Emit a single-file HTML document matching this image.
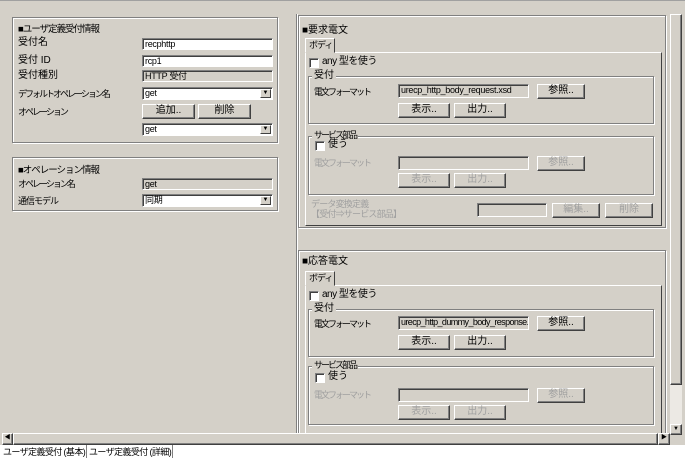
<!DOCTYPE html><html><head><meta charset="utf-8"><style>
*{box-sizing:border-box;margin:0;padding:0}
body{width:685px;height:461px;background:#fff;position:relative;overflow:hidden;font-family:"Liberation Sans","Noto Sans CJK JP",sans-serif;font-size:10px;color:#000}
.a{position:absolute}
.bg{left:0;top:0;width:685px;height:446px;background:#d4d0c8;border-top:1px solid #a0a0a0}
.g{position:absolute;border:1px solid #808080;box-shadow:inset 1px 1px 0 #fff,1px 1px 0 #fff}
.t{position:absolute;white-space:nowrap;line-height:12px}
.k{font-size:9px;letter-spacing:-2px}
.h{font-size:9.5px;letter-spacing:-1px}
.in{position:absolute;background:#fff;border:1px solid;border-color:#808080 #fff #fff #808080;box-shadow:inset 1px 1px 0 #404040;padding-left:2px;line-height:11px;white-space:nowrap;overflow:hidden;font-size:9px;letter-spacing:-0.3px}
.ro{background:#d4d0c8}
.b{position:absolute;background:#d4d0c8;border:1px solid;border-color:#fff #404040 #404040 #fff;box-shadow:inset -1px -1px 0 #808080;text-align:center;line-height:12px;white-space:nowrap}
.d{color:#a0a0a0}
.dd{position:absolute;right:1px;top:1px;width:11px;height:9px;background:#d4d0c8;border:1px solid;border-color:#fff #404040 #404040 #fff;font-size:6px;text-align:center;line-height:7px;letter-spacing:0}
.cb{position:absolute;width:10px;height:10px;background:#fff;border:1px solid;border-color:#808080 #fff #fff #808080;box-shadow:inset 1px 1px 0 #404040}
.lg{position:absolute;background:#d4d0c8;padding:0 2px;line-height:12px;white-space:nowrap}
.tab{position:absolute;background:#d4d0c8;border:1px solid;border-color:#fff #404040 transparent #fff;padding-left:3px;line-height:12px;white-space:nowrap;font-size:9px;letter-spacing:-1px}
</style></head><body>
<div class="a bg"></div>
<div class="a" style="left:296px;top:14px;width:1px;height:420px;background:#808080"></div>
<div class="a" style="left:297px;top:14px;width:1px;height:420px;background:#fff"></div>

<div class="g" style="left:12px;top:17px;width:266px;height:126px"></div>
<div class="t h" style="left:18px;top:24px">■ユーザ定義受付情報</div>
<div class="t" style="left:18px;top:37px">受付名</div>
<div class="in" style="left:142px;top:38px;width:131px;height:12px">recphttp</div>
<div class="t" style="left:18px;top:55px">受付 ID</div>
<div class="in" style="left:142px;top:55px;width:131px;height:12px">rcp1</div>
<div class="t" style="left:18px;top:70px">受付種別</div>
<div class="in ro" style="left:142px;top:70px;width:131px;height:12px">HTTP 受付</div>
<div class="t k" style="left:18px;top:88px">デフォルトオペレーション名</div>
<div class="in" style="left:142px;top:87px;width:131px;height:13px">get<div class="dd">▼</div></div>
<div class="t k" style="left:18px;top:106px">オペレーション</div>
<div class="b" style="left:142px;top:104px;width:53px;height:15px">追加..</div>
<div class="b" style="left:198px;top:104px;width:53px;height:15px">削除</div>
<div class="in" style="left:142px;top:123px;width:131px;height:13px">get<div class="dd">▼</div></div>

<div class="g" style="left:12px;top:157px;width:266px;height:54px"></div>
<div class="t h" style="left:18px;top:165px">■オペレーション情報</div>
<div class="t k" style="left:18px;top:178px">オペレーション名</div>
<div class="in ro" style="left:142px;top:178px;width:131px;height:12px">get</div>
<div class="t k" style="left:18px;top:195px;letter-spacing:-1px">通信モデル</div>
<div class="in" style="left:142px;top:194px;width:131px;height:13px">同期<div class="dd">▼</div></div>

<div class="g" style="left:298px;top:15px;width:368px;height:213px"></div>
<div class="t" style="left:302px;top:25px">■要求電文</div>
<div class="a" style="left:305px;top:52px;width:357px;height:174px;border:1px solid;border-color:#fff #404040 #404040 #fff"></div>
<div class="tab" style="left:305px;top:38px;width:30px;height:15px">ボディ</div>
<div class="cb" style="left:309px;top:58px"></div><div class="t" style="left:322px;top:56px;letter-spacing:-0.5px">any 型を使う</div>
<div class="g" style="left:308px;top:76px;width:346px;height:48px"></div><div class="lg" style="left:312px;top:70px">受付</div>
<div class="t k" style="left:314px;top:86px">電文フォーマット</div>
<div class="in ro" style="left:398px;top:84px;width:131px;height:14px">urecp_http_body_request.xsd</div>
<div class="b" style="left:537px;top:84px;width:48px;height:15px">参照..</div>
<div class="b" style="left:398px;top:103px;width:52px;height:15px">表示..</div>
<div class="b" style="left:454px;top:103px;width:52px;height:15px">出力..</div>
<div class="g" style="left:308px;top:136px;width:346px;height:59px"></div><div class="lg k" style="left:312px;top:129px">サービス部品</div>
<div class="cb" style="left:315px;top:141px"></div><div class="t" style="left:328px;top:139px">使う</div>
<div class="t d k" style="left:314px;top:157px">電文フォーマット</div>
<div class="in ro" style="left:398px;top:156px;width:131px;height:14px"></div>
<div class="b d" style="left:537px;top:156px;width:48px;height:15px">参照..</div>
<div class="b d" style="left:398px;top:173px;width:52px;height:15px">表示..</div>
<div class="b d" style="left:454px;top:173px;width:52px;height:15px">出力..</div>
<div class="t d" style="left:311px;top:199px;line-height:10px;font-size:9px;letter-spacing:-0.8px">データ変換定義<br>【受付⇒サービス部品】</div>
<div class="in ro" style="left:477px;top:203px;width:70px;height:14px"></div>
<div class="b d" style="left:552px;top:203px;width:48px;height:15px">編集..</div>
<div class="b d" style="left:605px;top:203px;width:48px;height:15px">削除</div>

<div class="g" style="left:298px;top:250px;width:368px;height:200px"></div>
<div class="t" style="left:302px;top:256px">■応答電文</div>
<div class="a" style="left:305px;top:285px;width:357px;height:160px;border:1px solid;border-color:#fff #404040 #404040 #fff"></div>
<div class="tab" style="left:305px;top:271px;width:30px;height:15px">ボディ</div>
<div class="cb" style="left:309px;top:291px"></div><div class="t" style="left:322px;top:289px;letter-spacing:-0.5px">any 型を使う</div>
<div class="g" style="left:308px;top:309px;width:346px;height:48px"></div><div class="lg" style="left:312px;top:303px">受付</div>
<div class="t k" style="left:314px;top:318px">電文フォーマット</div>
<div class="in ro" style="left:398px;top:316px;width:131px;height:14px;letter-spacing:-0.6px">urecp_http_dummy_body_response.xsd</div>
<div class="b" style="left:537px;top:316px;width:48px;height:15px">参照..</div>
<div class="b" style="left:398px;top:335px;width:52px;height:15px">表示..</div>
<div class="b" style="left:454px;top:335px;width:52px;height:15px">出力..</div>
<div class="g" style="left:308px;top:366px;width:346px;height:59px"></div><div class="lg k" style="left:312px;top:359px">サービス部品</div>
<div class="cb" style="left:315px;top:373px"></div><div class="t" style="left:328px;top:371px">使う</div>
<div class="t d k" style="left:314px;top:389px">電文フォーマット</div>
<div class="in ro" style="left:398px;top:388px;width:131px;height:14px"></div>
<div class="b d" style="left:537px;top:388px;width:48px;height:15px">参照..</div>
<div class="b d" style="left:398px;top:405px;width:52px;height:15px">表示..</div>
<div class="b d" style="left:454px;top:405px;width:52px;height:15px">出力..</div>

<div class="a" style="left:670px;top:14px;width:12px;height:420px;background:#ece9e4"></div>
<div class="b" style="left:670px;top:14px;width:12px;height:371px"></div>
<div class="b" style="left:670px;top:424px;width:12px;height:11px;font-size:6px;line-height:8px">▼</div>
<div class="a" style="left:0;top:433px;width:670px;height:12px;background:#d4d0c8;z-index:2"></div>
<div class="b" style="left:13px;top:433px;width:645px;height:12px;z-index:3"></div>
<div class="b" style="left:2px;top:433px;width:11px;height:12px;font-size:6px;line-height:9px;z-index:3">◀</div>
<div class="b" style="left:658px;top:433px;width:12px;height:12px;font-size:6px;line-height:9px;z-index:3">▶</div>
<div class="a" style="left:0;top:445px;width:685px;height:16px;background:#fff;z-index:4"></div>
<div class="t" style="left:3px;top:446px;z-index:5;font-size:9px;letter-spacing:-0.6px">ユーザ定義受付 (基本)</div>
<div class="a" style="left:86px;top:445px;width:1px;height:13px;background:#808080;z-index:5"></div>
<div class="t" style="left:89px;top:446px;z-index:5;font-size:9px;letter-spacing:-0.6px">ユーザ定義受付 (詳細)</div>
<div class="a" style="left:172px;top:445px;width:1px;height:13px;background:#808080;z-index:5"></div>
</body></html>
